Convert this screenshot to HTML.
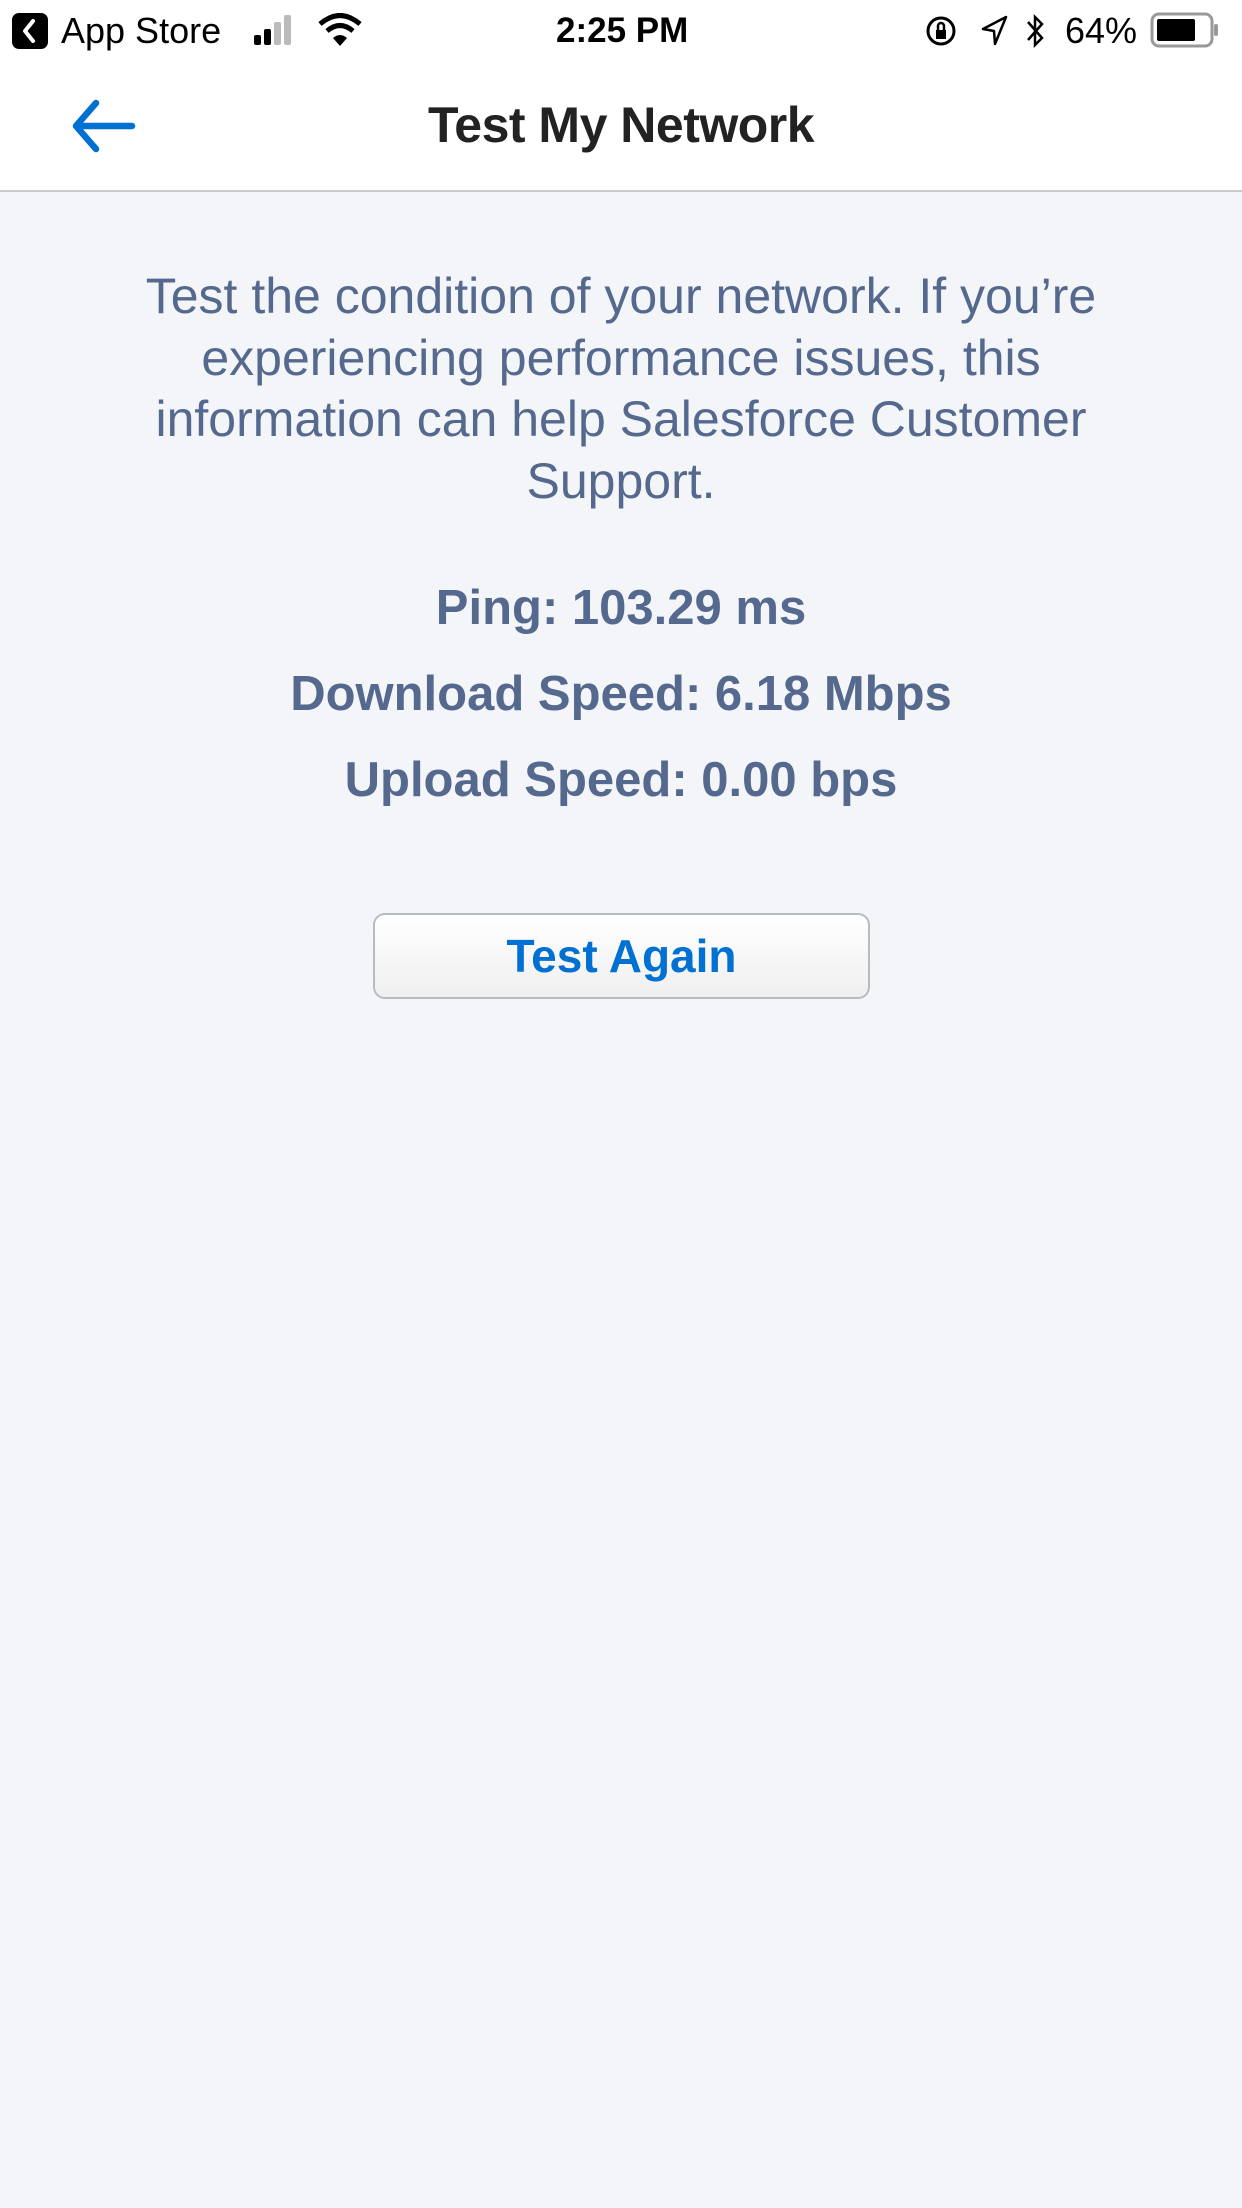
<!DOCTYPE html>
<html><head><meta charset="utf-8"><style>
*{margin:0;padding:0;box-sizing:border-box}
body{width:1242px;height:2208px;background:#f3f5f9;font-family:"Liberation Sans",sans-serif;position:relative;overflow:hidden}
.hdr{position:absolute;left:0;top:0;width:1242px;height:192px;background:#fff;border-bottom:2px solid #c9c9cc}
.st{position:absolute;top:10px;font-size:36px;color:#000;line-height:42px}
.title{position:absolute;left:0;width:1242px;top:96px;text-align:center;font-size:50px;font-weight:bold;color:#222;letter-spacing:-0.5px}
.p{position:absolute;left:0;width:1242px;text-align:center;color:#54698d;white-space:nowrap}
.btn{position:absolute;left:373px;top:913px;width:497px;height:86px;border:2px solid #b8bcc2;border-radius:12px;background:linear-gradient(#fff,#efefef);text-align:center;font-size:46px;font-weight:bold;color:#0070d2;line-height:82px}
</style></head><body>
<div class="hdr">
  <svg style="position:absolute;left:12px;top:13px" width="36" height="36" viewBox="0 0 36 36"><rect width="36" height="36" rx="7" fill="#000"/><path d="M21 8 L13 18 L21 28" stroke="#fff" stroke-width="4" fill="none" stroke-linecap="round" stroke-linejoin="round"/></svg>
  <div class="st" style="left:61px">App Store</div>
  <svg style="position:absolute;left:254px;top:15px" width="50" height="30"><rect x="0" y="20" width="7" height="10" rx="2" fill="#000"/><rect x="10" y="14" width="7" height="16" rx="2" fill="#000"/><rect x="20" y="7" width="7" height="23" rx="2" fill="#bbb"/><rect x="30" y="0" width="7" height="30" rx="2" fill="#bbb"/></svg>
  <svg style="position:absolute;left:318px;top:13px" width="44" height="34" viewBox="0 0 44 34"><path d="M2 11 Q22 -6 42 11" stroke="#000" stroke-width="5" fill="none"/><path d="M9 18 Q22 7 35 18" stroke="#000" stroke-width="5" fill="none"/><path d="M15 25 L22 33 L29 25 Q22 19 15 25Z" fill="#000"/></svg>
  <div class="st" style="left:556px;font-weight:bold;font-size:35px">2:25 PM</div>
  <svg style="position:absolute;left:924px;top:14px" width="36" height="36" viewBox="0 0 36 36"><circle cx="17" cy="17" r="13" stroke="#000" stroke-width="3" fill="none"/><rect x="12" y="16" width="10" height="9" fill="#000"/><path d="M14 16 V12 a3 3 0 0 1 6 0 V16" stroke="#000" stroke-width="2.5" fill="none"/></svg>
  <svg style="position:absolute;left:980px;top:15px" width="30" height="32" viewBox="0 0 30 32"><path d="M26 2 L3 14 L14 16 L15 29 Z" stroke="#000" stroke-width="2.5" fill="none" stroke-linejoin="round"/></svg>
  <svg style="position:absolute;left:1024px;top:12px" width="24" height="38" viewBox="0 0 24 38"><path d="M4 10 L18 26 L11 33 V5 L18 12 L4 28" stroke="#000" stroke-width="2.5" fill="none"/></svg>
  <div class="st" style="left:1065px">64%</div>
  <svg style="position:absolute;left:1150px;top:12px" width="72" height="36"><rect x="2" y="2" width="60" height="32" rx="7" stroke="#999" stroke-width="3" fill="none"/><rect x="7" y="7" width="38" height="22" rx="2" fill="#000"/><rect x="64" y="12" width="4" height="12" rx="2" fill="#999"/></svg>
  <svg style="position:absolute;left:68px;top:98px" width="68" height="56" viewBox="0 0 68 56"><path d="M28 5 L8 28 L28 51 M8 28 H64" stroke="#0070d2" stroke-width="6.5" fill="none" stroke-linecap="round" stroke-linejoin="round"/></svg>
  <div class="title">Test My Network</div>
</div>
<div class="p" style="top:266px;font-size:50px;line-height:61.5px">Test the condition of your network. If you’re<br>experiencing performance issues, this<br>information can help Salesforce Customer<br>Support.</div>
<div class="p" style="top:565px;font-size:49px;font-weight:bold;line-height:86px">Ping: 103.29 ms<br>Download Speed: 6.18 Mbps<br>Upload Speed: 0.00 bps</div>
<div class="btn">Test Again</div>
</body></html>
